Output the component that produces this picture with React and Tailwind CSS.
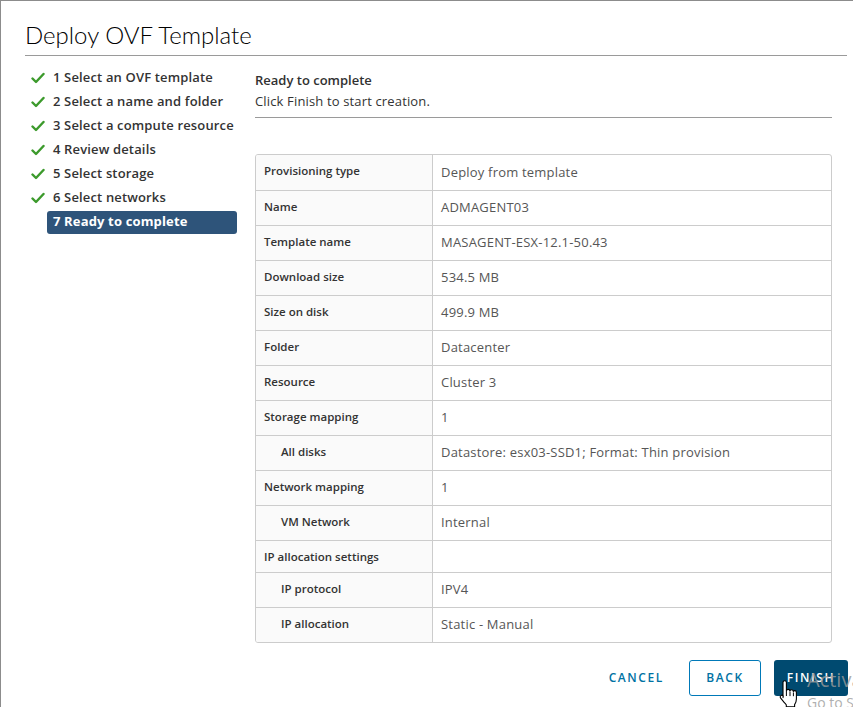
const steps = [
  "1 Select an OVF template",
  "2 Select a name and folder",
  "3 Select a compute resource",
  "4 Review details",
  "5 Select storage",
  "6 Select networks",
];

const rows = [
  { label: "Provisioning type", value: "Deploy from template" },
  { label: "Name", value: "ADMAGENT03" },
  { label: "Template name", value: "MASAGENT-ESX-12.1-50.43" },
  { label: "Download size", value: "534.5 MB" },
  { label: "Size on disk", value: "499.9 MB" },
  { label: "Folder", value: "Datacenter" },
  { label: "Resource", value: "Cluster 3" },
  { label: "Storage mapping", value: "1" },
  { label: "All disks", value: "Datastore: esx03-SSD1; Format: Thin provision", sub: true },
  { label: "Network mapping", value: "1" },
  { label: "VM Network", value: "Internal", sub: true },
  { label: "IP allocation settings", value: "", short: true },
  { label: "IP protocol", value: "IPV4", sub: true },
  { label: "IP allocation", value: "Static - Manual", sub: true },
];

function Check() {
  return (
    <svg width="14" height="12" viewBox="0 0 14 12" className="shrink-0">
      <path d="M1.5 6.5 L5 10 L12.5 2" fill="none" stroke="#3c9a2c" strokeWidth="2.4" strokeLinecap="round" strokeLinejoin="round" />
    </svg>
  );
}

function HandCursor() {
  return (
    <svg width="22" height="28" viewBox="0 0 22 28" className="absolute left-[776px] top-[679px]">
      <path
        d="M6 2.5c0-1.1.8-1.8 1.7-1.8s1.7.7 1.7 1.8v8.2c.3-.9 1-1.3 1.8-1.3.9 0 1.6.6 1.7 1.5.3-.7.9-1.1 1.700-1.1.9 0 1.6.7 1.7 1.6.3-.5.8-.8 1.4-.8 1 0 1.7.8 1.7 1.8v6.6c0 2.6-.8 4.2-1.8 5.6v2.2H9.3v-2c-1.4-1.4-3.2-3.6-5.6-6.6-.7-.9-.6-2 .2-2.6.8-.6 1.8-.4 2.4.3L6 17.6V2.5z"
        fill="#fff"
        stroke="#000"
        strokeWidth="1.1"
        strokeLinejoin="round"
      />
      <path d="M9.4 11v5M13 11.5v4.6M16.4 12.4v3.8" stroke="#000" strokeWidth="1" />
    </svg>
  );
}

export default function App() {
  return (
    <div className="relative w-[853px] h-[707px] overflow-hidden bg-white border-l border-t border-[#8c8c8c] font-['Open_Sans',sans-serif] text-[#333]">
      {/* Title */}
      <div className="ml-[24px] mr-[6px] pt-[20px] pb-[6px] border-b border-[#9a9a9a]">
        <h1 className="text-[24px] leading-[28px] font-light text-[#000] font-['Lato',sans-serif]">Deploy OVF Template</h1>
      </div>

      <div className="flex">
        {/* Steps */}
        <nav className="ml-[30px] w-[206px] pt-[10px] shrink-0">
          {steps.map((s) => (
            <div key={s} className="flex items-center h-6">
              <div className="w-[16px] shrink-0 flex justify-start">
                <Check />
              </div>
              <span className="px-[6px] text-[13px] tracking-[0.15px] font-semibold text-[#333] whitespace-nowrap">{s}</span>
            </div>
          ))}
          <div className="flex items-center h-6">
            <div className="w-[16px] shrink-0" />
            <span className="flex-1 h-[23px] flex items-center px-[6px] rounded-[3px] bg-[#2e547a] text-white text-[13px] tracking-[0.15px] font-bold whitespace-nowrap">
              7 Ready to complete
            </span>
          </div>
        </nav>

        {/* Content */}
        <div className="ml-[18px] w-[577px]">
          <div className="pt-[14px] pb-[5px] border-b border-[#9a9a9a]">
            <div className="text-[13px] leading-[20px] font-semibold text-[#313131]">Ready to complete</div>
            <div className="text-[13px] leading-[22px] tracking-[0.15px] text-[#333]">Click Finish to start creation.</div>
          </div>

          <div className="mt-[36px] border border-[#cccccc] rounded-[3px] overflow-hidden">
            {rows.map((r, i) => (
              <div
                key={r.label}
                className={`flex ${r.short ? "h-[32px]" : "h-[35px]"} ${i > 0 ? "border-t border-[#cccccc]" : ""}`}
              >
                <div
                  className={`w-[177px] shrink-0 bg-[#fafafa] border-r border-[#cccccc] pt-[8px] text-[11.5px] leading-[15px] font-semibold text-[#333] ${r.sub ? "pl-[25px]" : "pl-[8px]"}`}
                >
                  {r.label}
                </div>
                <div className="flex-1 flex items-center pl-[8px] text-[13px] tracking-[0.2px] text-[#565656]">{r.value}</div>
              </div>
            ))}
          </div>
        </div>
      </div>

      {/* Footer buttons */}
      <div className="flex justify-end items-center mt-[17px] mr-[5px] gap-[13px]">
        <button className="h-[36px] px-[12px] text-[12px] font-semibold tracking-[1.6px] text-[#0072a3]">CANCEL</button>
        <button className="h-[36px] w-[72px] border border-[#0079b8] rounded-[3px] text-[12px] font-semibold tracking-[1.6px] text-[#0072a3]">BACK</button>
        <button className="h-[36px] w-[74px] rounded-[3px] bg-[#004a70] text-[12px] font-semibold tracking-[1.6px] text-white">FINISH</button>
      </div>

      {/* Windows watermark */}
      <div className="absolute left-[806px] top-[667px] text-[20px] leading-[24px] text-[#9a9a9a]/80 whitespace-nowrap">Activate Windows</div>
      <div className="absolute left-[806px] top-[693px] text-[14px] leading-[18px] text-[#9a9a9a]/80 whitespace-nowrap">Go to Settings to activate Windows.</div>

      <HandCursor />
    </div>
  );
}
